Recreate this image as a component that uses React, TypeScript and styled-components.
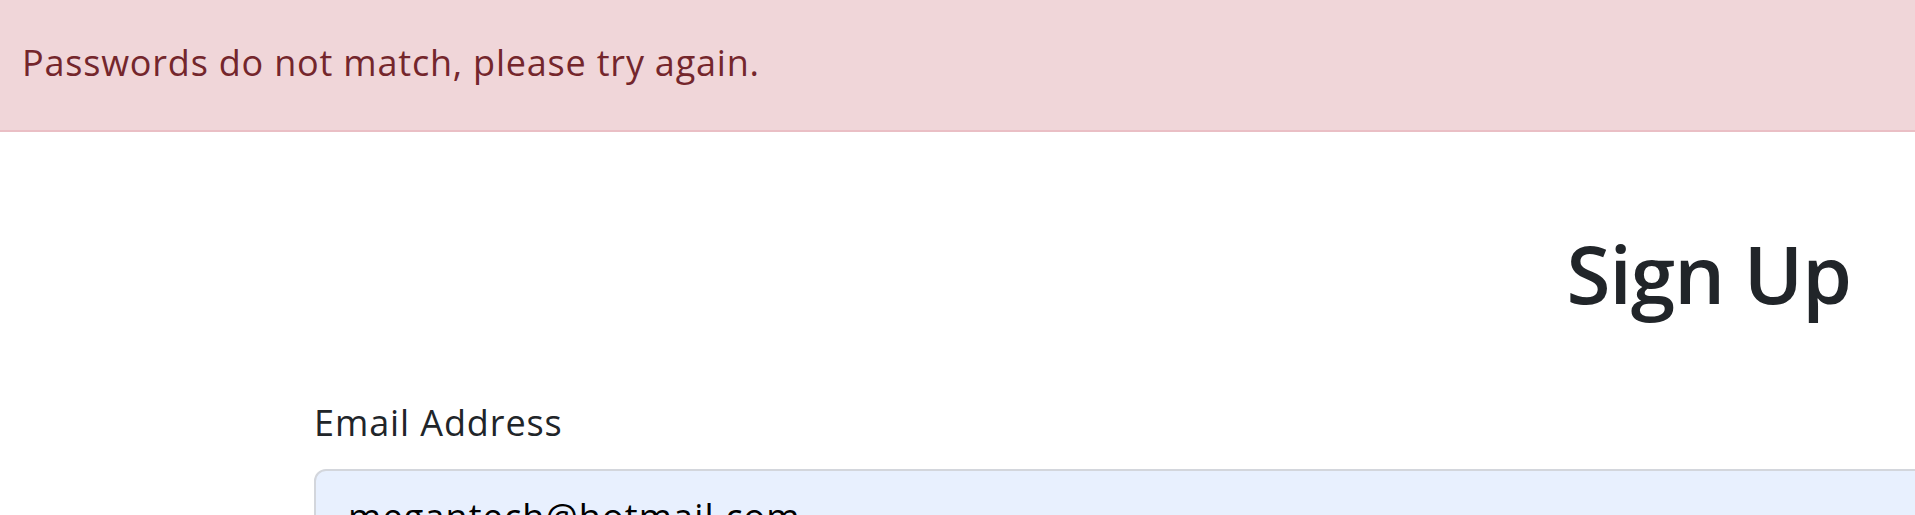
import styled, { createGlobalStyle } from 'styled-components';

const GlobalStyle = createGlobalStyle`
    html, body {
        margin: 0;
        padding: 0;
        background: #ffffff;
        overflow: hidden;
    }
    body {
        font-family: "Open Sans", "Noto Sans", sans-serif;
        color: #212529;
    }
`;

const Page = styled.div`
    width: 1915px;
    height: 515px;
    overflow: hidden;
`;

const Alert = styled.div`
    height: 132px;
    box-sizing: border-box;
    padding: 36px 22px 0;
    background: #f0d6d9;
    border-bottom: 2px solid #eabfc5;
    color: #74262c;
    font-size: 36px;
    line-height: 54px;
    letter-spacing: 0.8px;
`;

const Title = styled.h1`
    margin: 93px 0 0;
    padding-right: 64px;
    text-align: right;
    font-size: 80px;
    font-weight: 600;
    line-height: 96px;
    letter-spacing: -1px;
    color: #212529;
`;

const Form = styled.form`
    margin: 75px 0 0 314px;
    width: 1700px;
`;

const Label = styled.label`
    display: block;
    font-size: 36px;
    line-height: 54px;
    letter-spacing: 0.9px;
    color: #212529;
    margin-bottom: 19px;
`;

const Input = styled.input`
    display: block;
    width: 100%;
    box-sizing: border-box;
    padding: 19px 32px;
    border: 2px solid #d3d6dc;
    border-radius: 12px;
    background: #e8f0fe;
    font-family: "Open Sans", "Noto Sans", sans-serif;
    font-size: 36px;
    line-height: 54px;
    letter-spacing: 1.1px;
    color: #000000;
    outline: none;
`;

const App = () => {
    return <>
        <GlobalStyle />
        <Page>
            <Alert>Passwords do not match, please try again.</Alert>
            <Title>Sign Up</Title>
            <Form onSubmit={e => e.preventDefault()}>
                <Label htmlFor="email">Email Address</Label>
                <Input id="email" type="email" defaultValue="megantech@hotmail.com" />
            </Form>
        </Page>
    </>
}

export default App;
